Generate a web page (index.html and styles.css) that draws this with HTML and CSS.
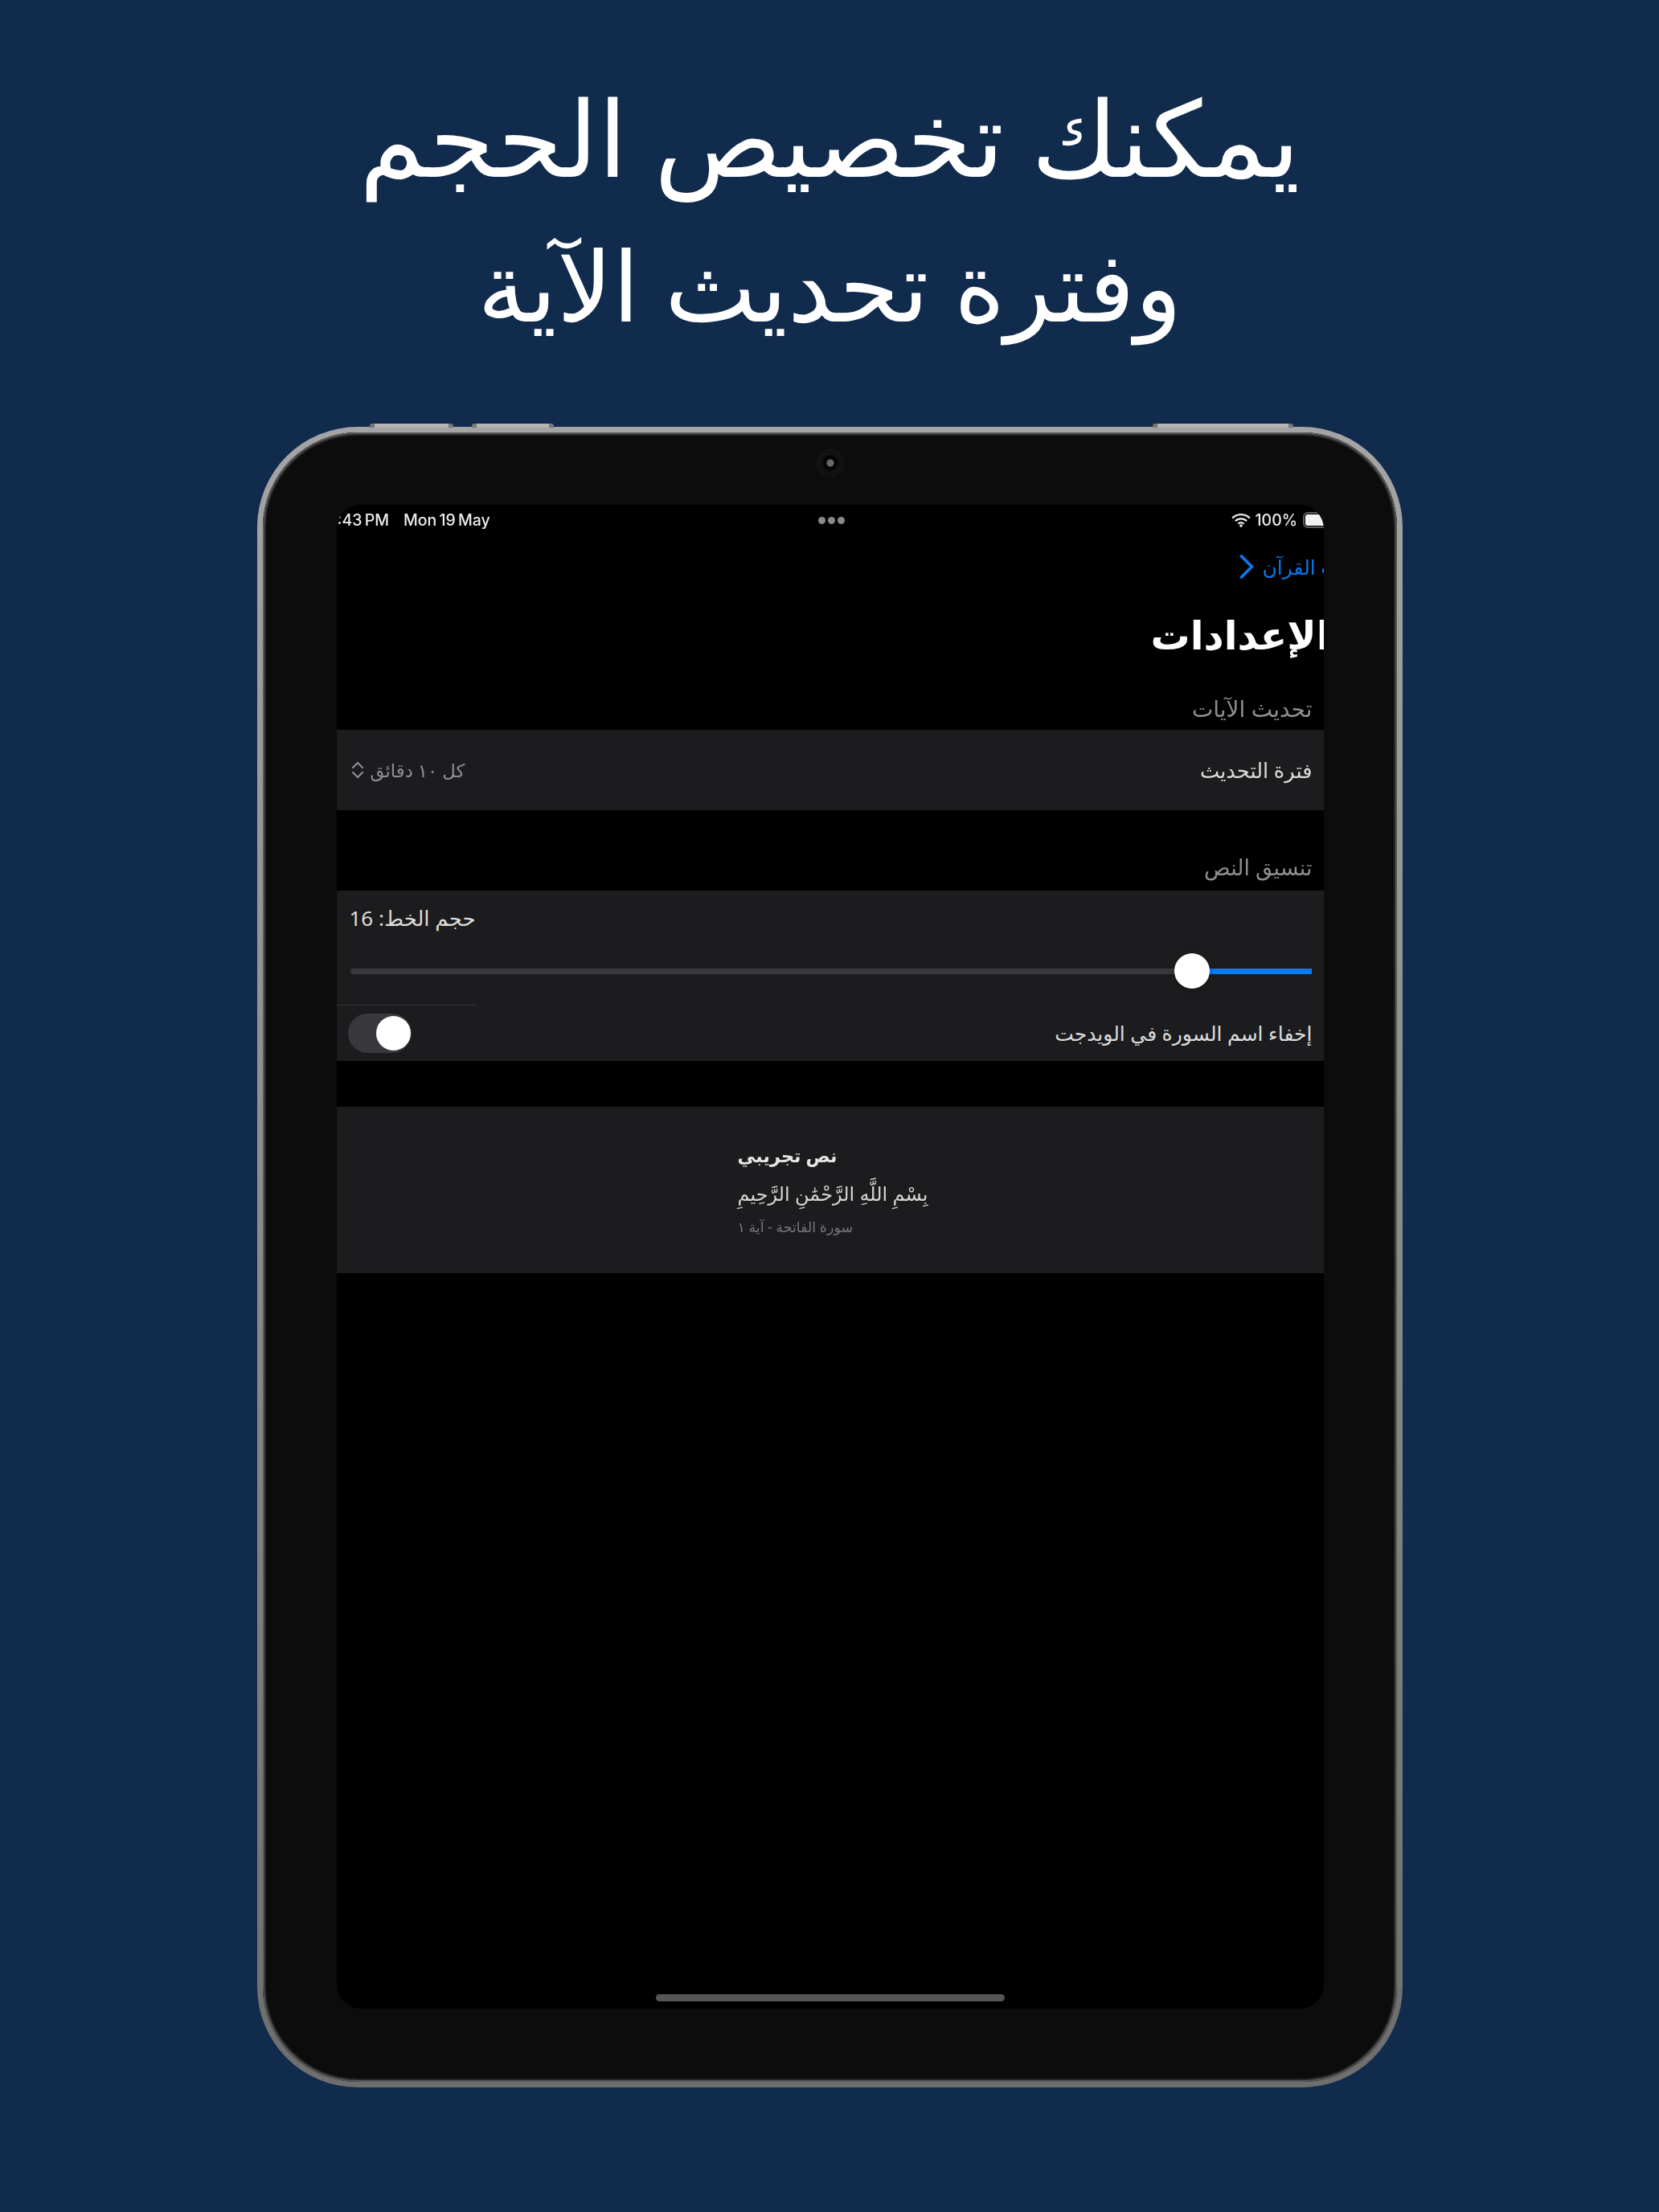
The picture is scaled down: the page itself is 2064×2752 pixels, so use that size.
FILE: index.html
```html
<!DOCTYPE html>
<html lang="ar">
<head>
<meta charset="utf-8">
<title>الإعدادات</title>
<link rel="stylesheet" href="styles.css">
</head>
<body>
<h1 class="headline" dir="rtl"><span class="line line-one">يمكنك تخصيص الحجم</span><span class="line line-two">وفترة تحديث الآية</span></h1>
<div class="device">
  <span class="btn btn-a"></span><span class="btn btn-b"></span><span class="btn btn-c"></span>
  <span class="camera"><span class="lens"></span></span>
  <div class="screen">
    <div class="status">
      <div class="status-left"><span class="time">:43 PM</span><span>Mon 19 May</span></div>
      <div class="dots"><i></i><i></i><i></i></div>
      <div class="status-right">
        <svg class="wifi" viewBox="0 0 24 17" width="24" height="17"><g fill="none" stroke="#e8e8e8" stroke-width="2.300"><path d="M1.200 5.600a15.300 15.300 0 0 1 21.600 0"/><path d="M4.900 9.300a10 10 0 0 1 14.200 0"/><path d="M8.400 12.700a5.100 5.100 0 0 1 7.200 0"/></g><circle cx="12" cy="15.100" r="1.800" fill="#e8e8e8"/></svg>
        <span>100%</span>
        <span class="battery"><span class="battery-fill"></span></span>
      </div>
    </div>
    <div class="nav">
      <svg class="chev" viewBox="0 0 18 30" width="18" height="30"><path d="M2.500 2 15.500 15l-13 13" fill="none" stroke="#0a78e8" stroke-width="3.800" stroke-linecap="round" stroke-linejoin="round"/></svg>
      <span class="back" dir="rtl">آيات القرآن</span>
    </div>
    <div class="content" dir="rtl">
      <h2 class="title">الإعدادات</h2>
      <div class="head head-first">تحديث الآيات</div>
      <div class="row row-refresh">
        <span class="label label-wide">فترة التحديث</span>
        <span class="value">كل ١٠ دقائق<svg class="updown" viewBox="0 0 18 22" width="18" height="22"><path d="M3 8 9 2l6 6M3 14l6 6 6-6" fill="none" stroke="#8e8e93" stroke-width="2.200" stroke-linecap="round" stroke-linejoin="round"/></svg></span>
      </div>
      <div class="head head-second">تنسيق النص</div>
      <div class="group">
        <div class="font-size"><span dir="rtl">حجم الخط: 16</span></div>
        <div class="slider"><span class="fill"></span><span class="knob"></span><span class="track"></span></div>
        <div class="sep"></div>
        <div class="row-toggle">
          <span class="label">إخفاء اسم السورة في الويدجت</span>
          <span class="toggle"><span class="toggle-knob"></span></span>
        </div>
      </div>
      <div class="preview">
        <div class="preview-body">
          <div class="p-title">نص تجريبي</div>
          <div class="p-verse">بِسْمِ اللَّهِ الرَّحْمَٰنِ الرَّحِيمِ</div>
          <div class="p-meta">سورة الفاتحة - آية ١</div>
        </div>
      </div>
    </div>
    <div class="home"></div>
  </div>
</div>
</body>
</html>
```
FILE: styles.css
```css
* { box-sizing: border-box; }
html, body { margin: 0; padding: 0; }
body {
  width: 2064px;
  height: 2752px;
  overflow: hidden;
  background: #102b4c;
  font-family: "Noto Sans", "DejaVu Sans", sans-serif;
  display: flex;
  flex-direction: column;
  align-items: center;
}
.headline {
  margin: 0;
  height: 527px;
  padding-top: 77px;
  display: flex;
  flex-direction: column;
  align-items: center;
  color: #fff;
  font-weight: 300;
}
.line { display: block; height: 184px; line-height: 184px; white-space: nowrap; }
.line-one { font-size: 131px; }
.line-two { font-size: 120.500px; }
.device {
  position: relative;
  margin-top: 4px;
  width: 1425px;
  height: 2066px;
  border-radius: 125px;
  border: 7px solid transparent;
  background: linear-gradient(#0c0c0c, #0c0c0c) padding-box, linear-gradient(#a4a4a4, #8a8a8a 50%, #6e6e6e) border-box;
  padding: 90px 91px 91px 92px;
  box-shadow: inset 0 0 0 2px #565656, inset 0 0 0 4px #262626;
}
.btn { position: absolute; top: -11px; height: 5px; background: linear-gradient(90deg, #777 0 6px, #b4b4b4 6px calc(100% - 6px), #777 calc(100% - 6px)); border-radius: 3px 3px 0 0; }
.btn-a { left: 133px; width: 104px; }
.btn-b { left: 260px; width: 102px; }
.btn-c { left: 1107px; width: 175px; }
.camera { position: absolute; left: 688px; top: 20px; width: 36px; height: 36px; border-radius: 50%; background: #101112; display: flex; align-items: center; justify-content: center; }
.lens { width: 20px; height: 20px; border-radius: 50%; background: radial-gradient(#6a6a6a 0 4px, #050505 5px); }
.screen {
  position: relative;
  width: 1228px;
  height: 1871px;
  background: #000;
  border-radius: 30px;
  overflow: hidden;
  filter: blur(.6px);
}
.status { height: 38px; padding-left: 1px; display: flex; align-items: center; justify-content: space-between; color: #ececec; font-family: Inter, "Liberation Sans", sans-serif; font-weight: 500; font-size: 19.500px; line-height: 26px; position: relative; }
.status-left { display: flex; gap: 18px; width: 208px; word-spacing: -2px; }
.dots { position: absolute; left: 599px; top: 15px; display: flex; gap: 3px; }
.dots i { width: 9px; height: 9px; border-radius: 50%; background: #8a8a8a; }
.status-right { display: flex; align-items: center; gap: 6px; width: 115px; height: 30px; }
.wifi { flex: none; }
.battery { flex: none; width: 46px; height: 20px; border: 2px solid #5c5c5c; border-radius: 6px; padding: 1px; margin-left: 1px; }
.battery-fill { display: block; height: 100%; background: #f2f2f2; border-radius: 3px; }
.nav { height: 77px; padding-left: 1123px; display: flex; align-items: center; gap: 11px; white-space: nowrap; }
.chev { flex: none; }
.back { color: #0a78e8; font-size: 25px; }
.title { margin: 0 -8px 0 0; height: 113px; font-size: 49px; font-weight: 700; line-height: 92px; color: #fff; white-space: nowrap; }
.head { color: #8e8e93; font-size: 28px; padding: 0 14px; }
.head-first { height: 52px; line-height: 50px; }
.head-second { height: 100px; padding-top: 44px; line-height: 54px; font-size: 27px; }
.row, .group, .preview { background: #1c1c1e; }
.row-refresh { height: 100px; padding: 0 14px 0 17px; display: flex; align-items: center; justify-content: space-between; }
.label { color: #dcdcdc; font-size: 25px; }
.label-wide { font-size: 25.700px; }
.value { color: #8e8e93; font-size: 22.800px; display: flex; align-items: center; gap: 7px; }
.group { height: 212px; position: relative; }
.font-size { height: 82px; padding-left: 16px; direction: ltr; display: flex; align-items: flex-start; padding-top: 16px; color: #dcdcdc; font-size: 26px; }
.slider { height: 60px; position: relative; margin: 0 15px 0 17px; }
.track { position: absolute; left: 0; top: 15px; height: 7px; width: 1030px; background: #3a3a3c; border-radius: 3px; }
.fill { position: absolute; left: 1060px; right: 0; top: 15px; height: 7px; background: #0a7cf0; }
.knob { position: absolute; left: 1025px; top: -4px; width: 44px; height: 44px; border-radius: 50%; background: #fff; box-shadow: 0 2px 8px rgba(0,0,0,.25); z-index: 1; }
.sep { height: 1px; width: 174px; background: #333336; position: absolute; left: 0; top: 142px; }
.row-toggle { display: flex; align-items: center; justify-content: space-between; padding: 0 14px 0 14px; height: 70px; }
.toggle { width: 79px; height: 49px; border-radius: 25px; background: #39393d; position: relative; flex: none; }
.toggle-knob { position: absolute; left: 35px; top: 3px; width: 43px; height: 43px; border-radius: 50%; background: #fff; }
.preview { margin-top: 57px; height: 207px; padding: 45px 0 0 499px; direction: ltr; }
.preview-body { width: 240px; text-align: left; }
.p-title { font-size: 22.500px; font-weight: 700; color: #e6e6e6; height: 46px; direction: rtl; }
.p-verse { font-size: 24px; color: #d4d4d4; height: 46px; white-space: nowrap; direction: rtl; }
.p-meta { font-size: 17.500px; color: #77777b; white-space: nowrap; direction: rtl; }
.p-title, .p-verse, .p-meta { unicode-bidi: isolate; text-align: left; }
.home { position: absolute; left: 397px; top: 1853px; width: 434px; height: 9px; border-radius: 5px; background: #555; }
```
